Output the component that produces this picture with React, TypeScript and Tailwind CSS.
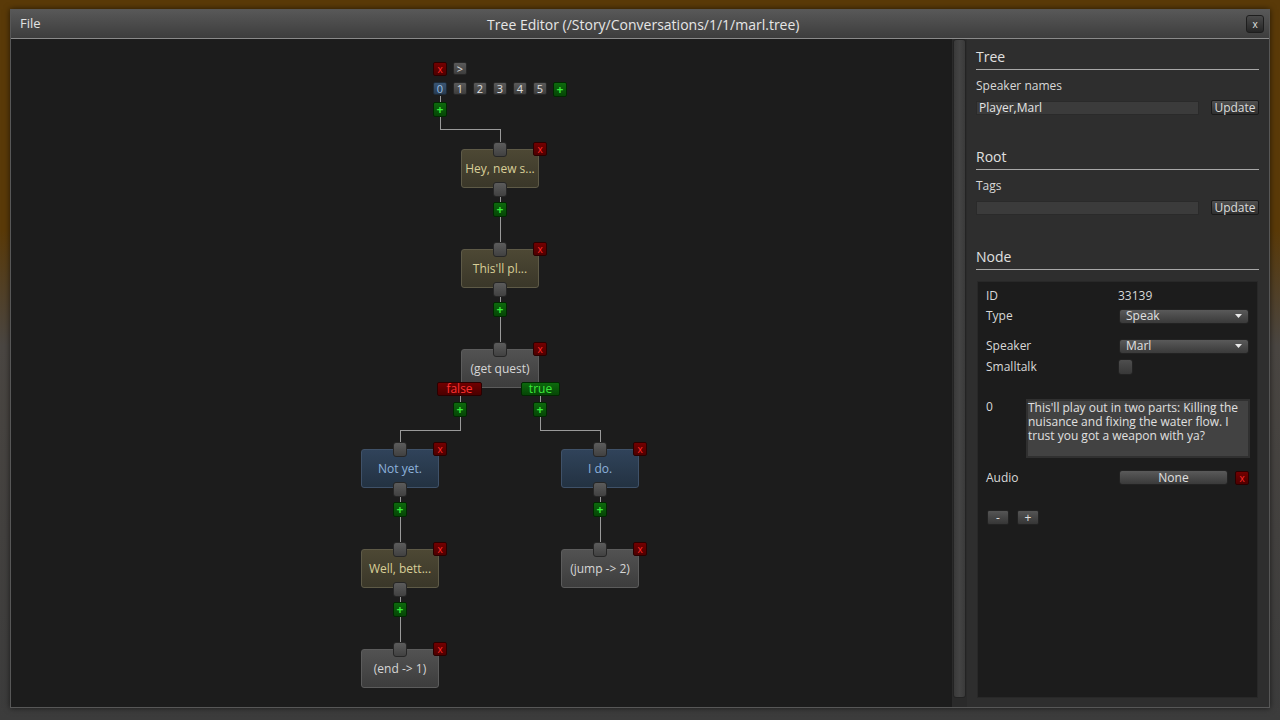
import React from "react";

type Kind = "olive" | "blue" | "grey";

type TreeNode = {
  x: number; // center x on screen
  t: number; // top of the input connector
  label: string;
  kind: Kind;
  out: boolean; // has output connector + add button below
};

// canvas origin on screen
const OX = 11;
const OY = 39;

const nodes: TreeNode[] = [
  { x: 500, t: 142, label: "Hey, new s...", kind: "olive", out: true },
  { x: 500, t: 242, label: "This'll pl...", kind: "olive", out: true },
  { x: 500, t: 342, label: "(get quest)", kind: "grey", out: false },
  { x: 400, t: 442, label: "Not yet.", kind: "blue", out: true },
  { x: 600, t: 442, label: "I do.", kind: "blue", out: true },
  { x: 400, t: 542, label: "Well, bett...", kind: "olive", out: true },
  { x: 600, t: 542, label: "(jump -> 2)", kind: "grey", out: false },
  { x: 400, t: 642, label: "(end -> 1)", kind: "grey", out: false },
];

const wires: string[] = [
  "440,96 440,129 500,129 500,142",
  "500,196 500,242",
  "500,296 500,342",
  "460,396 460,430 400,430 400,442",
  "540,396 540,430 600,430 600,442",
  "400,496 400,542",
  "600,496 600,542",
  "400,596 400,642",
];

const boxStyles: Record<Kind, string> = {
  olive: "bg-gradient-to-b from-[#4d4834] to-[#3a3729] border-[#5e5a47] text-[#d9cf98]",
  blue: "bg-gradient-to-b from-[#30435a] to-[#233242] border-[#3f5168] text-[#8db2dc]",
  grey: "bg-gradient-to-b from-[#525252] to-[#3d3d3d] border-[#5c5c5c] text-[#d6d6d6]",
};

function at(x: number, y: number) {
  return { left: x - OX, top: y - OY };
}

function Connector({ x, y }: { x: number; y: number }) {
  return (
    <div
      className="absolute z-20 h-[15px] w-[14px] rounded-[3px] border border-[#262626] bg-gradient-to-b from-[#5c5c5c] to-[#414141]"
      style={at(x, y)}
    />
  );
}

function RedX({ x, y }: { x: number; y: number }) {
  return (
    <div
      className="absolute z-20 flex h-[14px] w-[14px] items-center justify-center rounded-[2px] border border-[#2a0000] bg-gradient-to-b from-[#730000] to-[#4e0000] text-[10px] leading-none text-[#ff2a2a]"
      style={at(x, y)}
    >
      x
    </div>
  );
}

function GreenPlus({ x, y }: { x: number; y: number }) {
  return (
    <div
      className="absolute z-20 flex h-[15px] w-[14px] items-center justify-center rounded-[2px] border border-[#002800] bg-gradient-to-b from-[#0d6a0d] to-[#064506] text-[12px] font-bold leading-none text-[#3be83b]"
      style={at(x, y)}
    >
      +
    </div>
  );
}

function SmallBtn({ x, y, label, blue }: { x: number; y: number; label: string; blue?: boolean }) {
  return (
    <div
      className={
        blue
          ? "absolute z-20 flex h-[13px] w-[14px] items-center justify-center rounded-[2px] border border-[#1e2a36] bg-gradient-to-b from-[#3a5572] to-[#283c52] text-[11px] leading-none text-[#9cc0e4]"
          : "absolute z-20 flex h-[13px] w-[14px] items-center justify-center rounded-[2px] border border-[#262626] bg-gradient-to-b from-[#5a5a5a] to-[#3e3e3e] text-[11px] leading-none text-[#e0e0e0]"
      }
      style={at(x, y)}
    >
      {label}
    </div>
  );
}

function Node({ n }: { n: TreeNode }) {
  return (
    <>
      <div
        className={`absolute z-10 flex h-[39px] w-[78px] items-center justify-center rounded-[3px] border text-[12px] ${boxStyles[n.kind]}`}
        style={at(n.x - 39, n.t + 7)}
      >
        {n.label}
      </div>
      <Connector x={n.x - 7} y={n.t} />
      <RedX x={n.x + 33} y={n.t} />
      {n.out && (
        <>
          <Connector x={n.x - 7} y={n.t + 40} />
          <GreenPlus x={n.x - 7} y={n.t + 60} />
        </>
      )}
    </>
  );
}

function Canvas() {
  return (
    <div className="relative flex-1 overflow-hidden bg-[#1c1c1c]">
      <svg className="absolute inset-0 h-full w-full" viewBox={`${OX} ${OY} 941 668`} preserveAspectRatio="xMinYMin meet">
        {wires.map((p) => (
          <polyline key={p} points={p} fill="none" stroke="#9a9a9a" strokeWidth="1" shapeRendering="crispEdges" />
        ))}
      </svg>

      {/* root controls */}
      <RedX x={433} y={62} />
      <SmallBtn x={453} y={62} label=">" />
      {["0", "1", "2", "3", "4", "5"].map((s, i) => (
        <SmallBtn key={s} x={433 + i * 20} y={82} label={s} blue={i === 0} />
      ))}
      <GreenPlus x={553} y={82} />
      <GreenPlus x={433} y={102} />

      {nodes.map((n) => (
        <Node key={n.label} n={n} />
      ))}

      {/* branch buttons of (get quest) */}
      <div
        className="absolute z-20 flex h-[14px] w-[45px] items-center justify-center rounded-[2px] border border-[#2a0000] bg-gradient-to-b from-[#700000] to-[#4a0000] text-[12px] leading-none text-[#ff3030]"
        style={at(437, 382)}
      >
        false
      </div>
      <div
        className="absolute z-20 flex h-[14px] w-[39px] items-center justify-center rounded-[2px] border border-[#002800] bg-gradient-to-b from-[#0d6a0d] to-[#064506] text-[12px] leading-none text-[#3be83b]"
        style={at(521, 382)}
      >
        true
      </div>
      <GreenPlus x={453} y={402} />
      <GreenPlus x={533} y={402} />
    </div>
  );
}

function UpdateButton() {
  return (
    <button className="h-[15px] w-[48px] rounded-[2px] border border-[#1a1a1a] bg-gradient-to-b from-[#505050] to-[#2f2f2f] text-[12px] leading-none text-[#dcdcdc]">
      Update
    </button>
  );
}

function Heading({ children, first }: { children: React.ReactNode; first?: boolean }) {
  return (
    <div className={`${first ? "" : "mt-[33px]"} border-b border-[#a8a8a8] pb-[3px] text-[14px] leading-[18px] text-[#e0e0e0]`}>
      {children}
    </div>
  );
}

function Dropdown({ value }: { value: string }) {
  return (
    <div className="flex h-[15px] w-[130px] items-center justify-between rounded-[3px] border border-[#222] bg-gradient-to-b from-[#5a5a5a] to-[#3a3a3a] pl-[6px] pr-[6px] text-[12px] leading-none text-[#e0e0e0]">
      <span>{value}</span>
      <svg width="7" height="4" viewBox="0 0 7 4">
        <path d="M0 0h7L3.5 4z" fill="#e8e8e8" />
      </svg>
    </div>
  );
}

function SidePanel() {
  return (
    <div className="flex w-[302px] flex-col bg-[#2e2e2e] pl-[9px] pr-[10px] pt-[9px] pb-[9px] text-[#d8d8d8]">
      <Heading first>Tree</Heading>
      <div className="mt-[8px] text-[12px] leading-[16px]">Speaker names</div>
      <div className="mt-[6px] flex h-[15px] items-center justify-between">
        <div className="h-[14px] w-[223px] self-end border border-[#2a2a2a] bg-[#3b3b3b] pl-[2px] text-[12px] leading-[12px] text-[#e4e4e4]">
          Player,Marl
        </div>
        <UpdateButton />
      </div>

      <Heading>Root</Heading>
      <div className="mt-[8px] text-[12px] leading-[16px]">Tags</div>
      <div className="mt-[6px] flex h-[15px] items-center justify-between">
        <div className="h-[14px] w-[223px] self-end border border-[#2a2a2a] bg-[#3b3b3b]" />
        <UpdateButton />
      </div>

      <Heading>Node</Heading>
      <div className="mt-[11px] ml-[1px] mr-[1px] flex flex-1 flex-col border border-[#282828] bg-[#1c1c1c] pl-[8px] pr-[7px] pt-[6px] text-[12px]">
        <div className="flex h-[16px] items-center">
          <span className="w-[132px]">ID</span>
          <span>33139</span>
        </div>
        <div className="mt-[4px] flex h-[16px] items-center">
          <span className="w-[133px]">Type</span>
          <Dropdown value="Speak" />
        </div>
        <div className="mt-[14px] flex h-[16px] items-center">
          <span className="w-[133px]">Speaker</span>
          <Dropdown value="Marl" />
        </div>
        <div className="mt-[5px] flex h-[16px] items-center">
          <span className="w-[132px]">Smalltalk</span>
          <div className="h-[16px] w-[15px] rounded-[3px] border border-[#222] bg-gradient-to-b from-[#4e4e4e] to-[#383838]" />
        </div>
        <div className="mt-[24px] flex items-start">
          <span className="w-[40px] pt-[1px] leading-[14px]">0</span>
          <div className="h-[59px] w-[224px] border-2 border-[#303030] bg-[#424242] pt-[0px] leading-[14px] text-[#e0e0e0]">
            This'll play out in two parts: Killing the nuisance and fixing the water flow. I trust you got a weapon with ya?
          </div>
        </div>
        <div className="mt-[12px] flex h-[15px] items-center">
          <span className="w-[133px]">Audio</span>
          <div className="flex h-[15px] w-[109px] items-center justify-center rounded-[3px] border border-[#222] bg-gradient-to-b from-[#5a5a5a] to-[#3a3a3a] leading-none text-[#e0e0e0]">
            None
          </div>
          <div className="ml-[7px] flex h-[14px] w-[14px] items-center justify-center rounded-[2px] border border-[#2a0000] bg-gradient-to-b from-[#730000] to-[#4e0000] text-[10px] leading-none text-[#ff2a2a]">
            x
          </div>
        </div>
        <div className="mt-[25px] flex gap-[8px] pl-[1px]">
          <div className="flex h-[15px] w-[22px] items-center justify-center rounded-[2px] border border-[#222] bg-gradient-to-b from-[#555] to-[#363636] leading-none text-[#e0e0e0]">
            -
          </div>
          <div className="flex h-[15px] w-[22px] items-center justify-center rounded-[2px] border border-[#222] bg-gradient-to-b from-[#555] to-[#363636] leading-none text-[#e0e0e0]">
            +
          </div>
        </div>
      </div>
    </div>
  );
}

export default function App() {
  return (
    <div className="h-[720px] w-[1280px] overflow-hidden bg-[linear-gradient(180deg,#5a3a08_0%,#5a3a08_32%,#4a4642_48%,#3c3c3c_100%)] pl-[10px] pt-[9px] font-['Open_Sans',sans-serif]">
      <div className="flex h-[699px] w-[1260px] flex-col border border-[#575757] bg-[#2e2e2e] shadow-[0_0_6px_rgba(0,0,0,0.6)]">
        {/* title bar */}
        <div className="relative flex h-[29px] items-center border-b border-[#8a8a8a] bg-gradient-to-b from-[#585858] to-[#3d3d3d] pl-[9px] pr-[5px]">
          <span className="text-[13px] text-[#e2e2e2]">File</span>
          <span className="flex-1 text-center text-[14px] text-[#e6e6e6]">
            Tree Editor (/Story/Conversations/1/1/marl.tree)
          </span>
          <button className="flex h-[18px] w-[18px] items-center justify-center rounded-[3px] border border-[#1e1e1e] bg-gradient-to-b from-[#4a4a4a] to-[#262626] text-[10px] leading-none text-[#e0e0e0]">
            x
          </button>
        </div>

        <div className="flex min-h-0 flex-1">
          <Canvas />
          {/* vertical scrollbar */}
          <div className="flex w-[15px] flex-col bg-[#2a2a2a] pb-[9px]">
            <div className="mx-[1px] flex-1 rounded-[3px] border border-[#232323] bg-gradient-to-r from-[#3a3a3a] via-[#444] to-[#3a3a3a]" />
          </div>
          <SidePanel />
        </div>
      </div>
    </div>
  );
}
